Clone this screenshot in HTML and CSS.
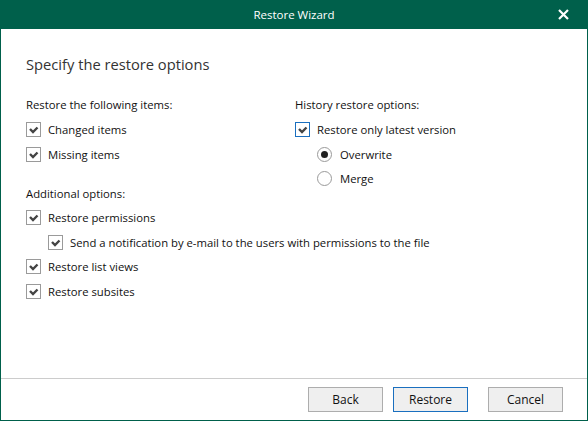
FILE: index.html
```html
<!DOCTYPE html>
<html lang="en">
<head>
  <meta charset="UTF-8" />
  <meta name="viewport" content="width=device-width, initial-scale=1" />
  <title>Restore Wizard</title>
  <link rel="stylesheet" href="styles.css">
</head>
<body>
  <div class="dialog">
    <header class="titlebar">
      <span class="title">Restore Wizard</span>
      <button class="close" aria-label="Close">
        <svg width="11" height="11" viewBox="0 0 11 11"><path d="M1 1 L10 10 M10 1 L1 10" stroke="#fff" stroke-width="2.2" /></svg>
      </button>
    </header>

    <main class="body">
      <h1>Specify the restore options</h1>

      <div class="options">
        <section class="group items">
          <div class="label">Restore the following items:</div>
          <label class="row"><span class="box"><svg viewBox="0 0 13 13"><path d="M3 6 L6 9 L10.5 4.5" /></svg></span>Changed items</label>
          <label class="row"><span class="box"><svg viewBox="0 0 13 13"><path d="M3 6 L6 9 L10.5 4.5" /></svg></span>Missing items</label>
        </section>

        <section class="group history">
          <div class="label">History restore options:</div>
          <label class="row"><span class="box focus"><svg viewBox="0 0 13 13"><path d="M3 6 L6 9 L10.5 4.5" /></svg></span>Restore only latest version</label>
          <label class="row radio-row sub"><span class="radio on"></span>Overwrite</label>
          <label class="row radio-row sub"><span class="radio"></span>Merge</label>
        </section>

        <section class="group additional">
          <div class="label">Additional options:</div>
          <label class="row"><span class="box"><svg viewBox="0 0 13 13"><path d="M3 6 L6 9 L10.5 4.5" /></svg></span>Restore permissions</label>
          <label class="row sub"><span class="box"><svg viewBox="0 0 13 13"><path d="M3 6 L6 9 L10.5 4.5" /></svg></span>Send a notification by e-mail to the users with permissions to the file</label>
          <label class="row"><span class="box"><svg viewBox="0 0 13 13"><path d="M3 6 L6 9 L10.5 4.5" /></svg></span>Restore list views</label>
          <label class="row"><span class="box"><svg viewBox="0 0 13 13"><path d="M3 6 L6 9 L10.5 4.5" /></svg></span>Restore subsites</label>
        </section>
      </div>
    </main>

    <footer class="footer">
      <button class="btn">Back</button>
      <button class="btn primary">Restore</button>
      <button class="btn cancel">Cancel</button>
    </footer>
  </div>
</body>
</html>
```

FILE: styles.css
```css
* { margin: 0; padding: 0; box-sizing: border-box; }
html, body {
  width: 588px;
  height: 421px;
  background: #fff;
  font-family: 'Open Sans', 'Noto Sans', sans-serif;
  font-size: 11.3px;
  color: #111;
}
.dialog {
  width: 588px;
  height: 421px;
  display: flex;
  flex-direction: column;
  border: 1px solid #00604b;
  border-top: none;
  background: #fff;
}
.titlebar {
  height: 29px;
  margin: 0 -1px;
  background: #00604b;
  color: #fff;
  display: flex;
  align-items: center;
  justify-content: center;
  position: relative;
}
.title {
  font-size: 11.5px;
}
.close {
  position: absolute;
  right: 19px;
  top: 9px;
  width: 11px;
  height: 11px;
  background: none;
  border: none;
  display: flex;
}
.body {
  flex: 1;
  padding: 25px 25px 0 25px;
}
h1 {
  font-size: 14.7px;
  font-weight: 400;
  line-height: 20px;
  color: #333;
  margin-bottom: 18px;
}
.options {
  display: grid;
  grid-template-columns: 269px 1fr;
  align-items: start;
}
.items { grid-column: 1; grid-row: 1; }
.history { grid-column: 2; grid-row: 1 / 3; }
.additional { grid-column: 1 / 3; grid-row: 2; margin-top: 14px; }

.label,
.row {
  height: 25px;
  display: flex;
  align-items: center;
  white-space: nowrap;
}
.radio-row { height: 24px; }
.additional .label,
.additional .row { height: 24.5px; }
.sub { padding-left: 22px; }

.box {
  width: 15px;
  height: 15px;
  border: 1px solid #9a9a9a;
  background: #fff;
  margin-right: 7px;
  display: flex;
  flex-shrink: 0;
}
.box svg {
  width: 13px;
  height: 13px;
}
.box path {
  fill: none;
  stroke: #444;
  stroke-width: 2.4;
}
.box.focus { border-color: #1a6fbf; }

.radio {
  width: 15px;
  height: 15px;
  border: 1px solid #9a9a9a;
  border-radius: 50%;
  margin-right: 8px;
  display: flex;
  align-items: center;
  justify-content: center;
  flex-shrink: 0;
}
.radio.on::after {
  content: '';
  width: 7px;
  height: 7px;
  border-radius: 50%;
  background: #222;
}

.footer {
  height: 42px;
  border-top: 1px solid #cccccc;
  padding: 8px 24px 8px 0;
  display: flex;
  justify-content: flex-end;
  gap: 10px;
}
.btn {
  width: 75px;
  height: 25px;
  background: #efefef;
  border: 1px solid #adadad;
  font-family: inherit;
  font-size: 12px;
  color: #111;
}
.btn.primary { border-color: #1a6fbf; }
.btn.cancel { margin-left: 10px; }
```
